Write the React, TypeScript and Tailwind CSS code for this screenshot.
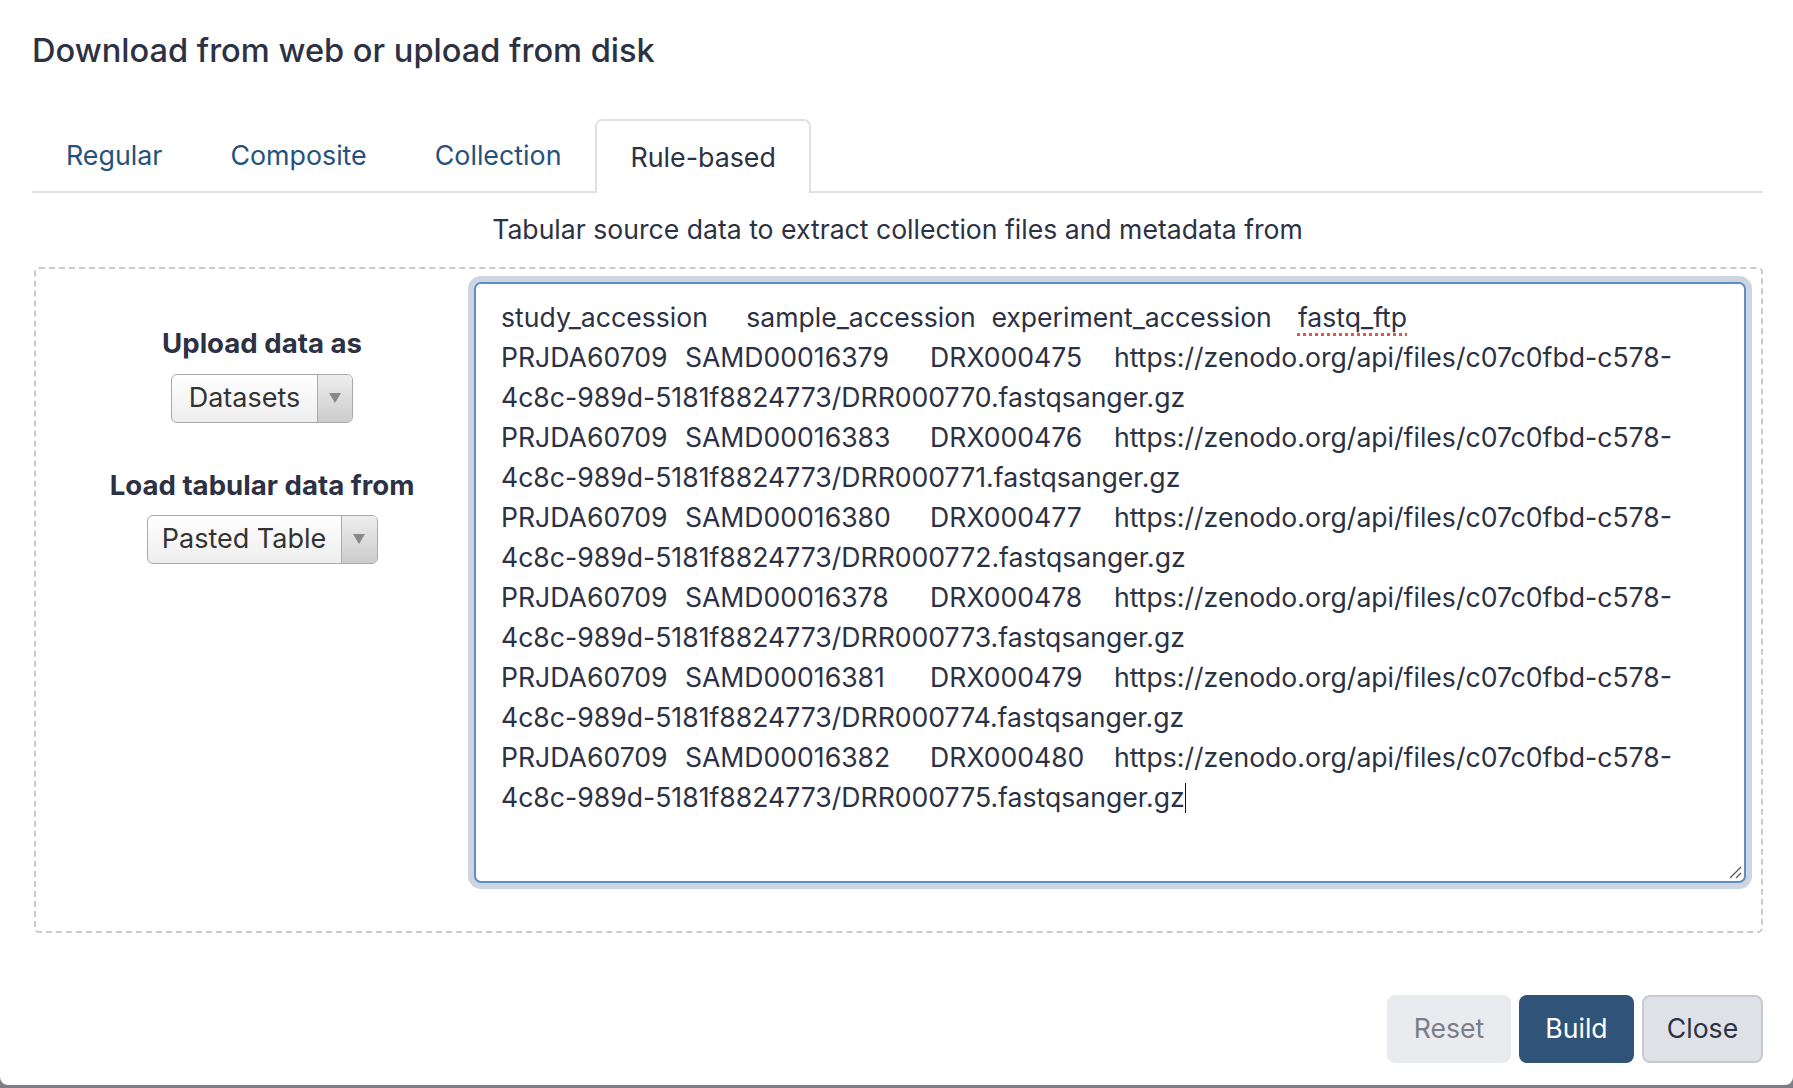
import React from "react";

const rows = [
  ["SAMD00016379", "DRX000475", "DRR000770"],
  ["SAMD00016383", "DRX000476", "DRR000771"],
  ["SAMD00016380", "DRX000477", "DRR000772"],
  ["SAMD00016378", "DRX000478", "DRR000773"],
  ["SAMD00016381", "DRX000479", "DRR000774"],
  ["SAMD00016382", "DRX000480", "DRR000775"],
];

function Select({ label, width, arrowW }: { label: string; width: string; arrowW: string }) {
  return (
    <div
      className={`flex h-[49px] ${width} rounded-[6px] border border-[#aaaaaa] bg-gradient-to-b from-white to-[#eeeeee] overflow-hidden`}
    >
      <div className="flex-1 flex items-center justify-center text-[27px] text-[#333333]">{label}</div>
      <div
        className={`${arrowW} flex items-center justify-center border-l border-[#aaaaaa] bg-gradient-to-b from-[#eeeeee] to-[#cccccc]`}
      >
        <svg width="12" height="11" viewBox="0 0 12 11">
          <polygon points="0,0 12,0 6,10" fill="#888888" />
        </svg>
      </div>
    </div>
  );
}

export default function App() {
  return (
    <div className="w-full h-[1088px] bg-[#7b7e86] font-['Inter',sans-serif] text-[#2c3143]">
      <div className="h-[1085px] bg-white rounded-b-[8px] pl-[32px] pr-[30px] flex flex-col">
        <h1 className="mt-[31px] text-[32.6px] leading-[38px] font-medium">
          Download from web or upload from disk
        </h1>

        <div className="mt-[50px] flex border-b-2 border-[#dee2e6] h-[74px]">
          {["Regular", "Composite", "Collection"].map((t) => (
            <div key={t} className="px-[34px] flex items-center text-[26.8px] text-[#25527a]">
              {t}
            </div>
          ))}
          <div className="px-[33px] flex items-center text-[26.8px] text-[#2c3143] bg-white border-2 border-b-0 border-[#dee2e6] rounded-t-[7px] -mb-[2px] relative">
            Rule-based
          </div>
        </div>

        <div className="mt-[16px] text-center text-[26.6px] leading-[40px]">
          Tabular source data to extract collection files and metadata from
        </div>

        <div className="mt-[18px] ml-[2px] border-2 border-dashed border-[#c6cad1] rounded-[5px] flex pt-[13px] pr-[15px] pb-[48px]">
          <div className="w-[438px] pl-[14px] flex flex-col items-center pt-[43px]">
            <div className="text-[27.6px] leading-[36px] font-bold">Upload data as</div>
            <div className="mt-[13px]">
              <Select label="Datasets" width="w-[182px]" arrowW="w-[35px]" />
            </div>
            <div className="mt-[44px] text-[27.6px] leading-[36px] font-bold">Load tabular data from</div>
            <div className="mt-[12px]">
              <Select label="Pasted Table" width="w-[231px]" arrowW="w-[36px]" />
            </div>
          </div>

          <div className="flex-1 relative h-[601px] rounded-[7px] border-2 border-[#5f8ec7] ring-[6px] ring-[#cdd6e0] bg-white pt-[13px] pl-[25px] text-[26.6px] leading-[40px] whitespace-pre [tab-size:61.3px]">
            <div>
              {"study_accession\tsample_accession\texperiment_accession\t"}
              <span className="underline decoration-dotted decoration-[#e5534b] decoration-[3px] underline-offset-[6px]">
                fastq_ftp
              </span>
            </div>
            {rows.map(([s, d, r], i) => (
              <React.Fragment key={s}>
                <div>{`PRJDA60709\t${s}\t${d}\thttps://zenodo.org/api/files/c07c0fbd-c578-`}</div>
                <div>
                  {`4c8c-989d-5181f8824773/${r}.fastqsanger.gz`}
                  {i === rows.length - 1 && (
                    <span className="inline-block w-[1.5px] h-[30px] bg-[#111111] align-middle -mt-[4px]" />
                  )}
                </div>
              </React.Fragment>
            ))}
            <svg className="absolute right-[2px] bottom-[2px]" width="14" height="14" viewBox="0 0 14 14">
              <line x1="2" y1="13" x2="13" y2="2" stroke="#555" strokeWidth="1.3" />
              <line x1="8" y1="13" x2="13" y2="8" stroke="#555" strokeWidth="1.3" />
            </svg>
          </div>
        </div>

        <div className="mt-[62px] flex justify-end gap-[8px]">
          <button className="h-[68px] w-[124px] rounded-[8px] bg-[#e9ebef] text-[26.6px] text-[#7a7e86]">
            Reset
          </button>
          <button className="h-[68px] w-[115px] rounded-[8px] bg-[#2f5478] text-[26.6px] text-white">
            Build
          </button>
          <button className="h-[68px] w-[121px] rounded-[8px] bg-[#dee2e7] border-2 border-[#c5cad2] text-[26.6px] text-[#2c3143]">
            Close
          </button>
        </div>
      </div>
    </div>
  );
}
